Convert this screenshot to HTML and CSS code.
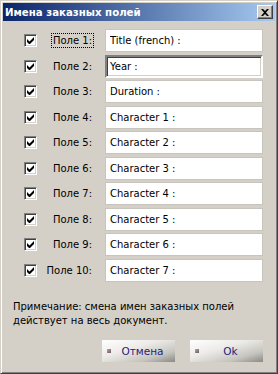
FILE: index.html
```html
<!DOCTYPE html>
<html lang="ru">
<head>
    <meta charset="UTF-8">
    <title>Имена заказных полей</title>
    <link rel="stylesheet" href="styles.css">
</head>
<body>
    <div class="window">
        <!-- Заголовок -->
        <div class="titlebar">
            <span class="title">Имена заказных полей</span>
            <span class="close">
                <svg width="8" height="7" viewBox="0 0 8 7">
                    <path d="M0 0h2l2 2 2-2h2L5 3.5 8 7H6L4 5 2 7H0l3-3.5z" fill="#000"/>
                </svg>
            </span>
        </div>

        <!-- Поля -->
        <div class="fields">
            <div class="row">
                <span class="check"></span>
                <label class="name"><span class="focus">Поле 1:</span></label>
                <input class="field" type="text" value="Title (french) :">
            </div>
            <div class="row">
                <span class="check"></span>
                <label class="name">Поле 2:</label>
                <input class="field sunken" type="text" value="Year :">
            </div>
            <div class="row">
                <span class="check"></span>
                <label class="name">Поле 3:</label>
                <input class="field" type="text" value="Duration :">
            </div>
            <div class="row">
                <span class="check"></span>
                <label class="name">Поле 4:</label>
                <input class="field" type="text" value="Character 1 :">
            </div>
            <div class="row">
                <span class="check"></span>
                <label class="name">Поле 5:</label>
                <input class="field" type="text" value="Character 2 :">
            </div>
            <div class="row">
                <span class="check"></span>
                <label class="name">Поле 6:</label>
                <input class="field" type="text" value="Character 3 :">
            </div>
            <div class="row">
                <span class="check"></span>
                <label class="name">Поле 7:</label>
                <input class="field" type="text" value="Character 4 :">
            </div>
            <div class="row">
                <span class="check"></span>
                <label class="name">Поле 8:</label>
                <input class="field" type="text" value="Character 5 :">
            </div>
            <div class="row">
                <span class="check"></span>
                <label class="name">Поле 9:</label>
                <input class="field" type="text" value="Character 6 :">
            </div>
            <div class="row">
                <span class="check"></span>
                <label class="name">Поле 10:</label>
                <input class="field" type="text" value="Character 7 :">
            </div>
        </div>

        <p class="note">Примечание: смена имен заказных полей<br>действует на весь документ.</p>

        <!-- Кнопки -->
        <div class="buttons">
            <button class="btn" type="button"><span class="bullet"></span>Отмена</button>
            <button class="btn" type="button"><span class="bullet"></span>Ok</button>
        </div>
    </div>
</body>
</html>
```

FILE: styles.css
```css
/* General */
body {
    margin: 0;
    font-family: 'DejaVu Sans', sans-serif;
    font-size: 10px;
    color: #000;
    background: #d4d0c8;
}

.window {
    width: 278px;
    height: 374px;
    box-sizing: border-box;
    border: 1px solid;
    border-color: #d4d0c8 #404040 #404040 #d4d0c8;
    box-shadow: inset 1px 1px #fff, inset -1px -1px #808080;
    padding: 2px;
    background: #d4d0c8;
    display: flex;
    flex-direction: column;
}

/* Заголовок */
.titlebar {
    height: 18px;
    display: flex;
    align-items: center;
    justify-content: space-between;
    padding: 0 2px 0 2px;
    background: linear-gradient(to right, #0a246a, #a6caf0);
}

.title {
    color: #fff;
    font-weight: bold;
    font-size: 10.2px;
}

.close {
    width: 16px;
    height: 14px;
    box-sizing: border-box;
    display: flex;
    align-items: center;
    justify-content: center;
    background: #d4d0c8;
    border: 1px solid;
    border-color: #fff #404040 #404040 #fff;
    box-shadow: inset -1px -1px #808080;
}

/* Поля */
.fields {
    display: grid;
    grid-auto-rows: 23px;
    row-gap: 2.55px;
    margin-top: 8px;
    padding-left: 21px;
}

.row {
    display: flex;
    align-items: center;
}

.check {
    width: 13px;
    height: 13px;
    box-sizing: border-box;
    border: 1px solid;
    border-color: #808080 #fff #fff #808080;
    box-shadow: inset 1px 1px #404040, inset -1px -1px #d4d0c8;
    background: #fff url("data:image/svg+xml,%3Csvg xmlns='http://www.w3.org/2000/svg' width='7' height='7'%3E%3Cpath d='M0 2v3l2 2h1l4-4V0L2.5 4.5z' fill='%23000'/%3E%3C/svg%3E") no-repeat 2px 2px;
}

.name {
    width: 55px;
    text-align: right;
}

.focus {
    outline: 1px dotted #000;
    outline-offset: 1px;
}

.field {
    width: 158px;
    height: 23px;
    box-sizing: border-box;
    margin-left: 13px;
    padding: 0 0 0 4px;
    font-family: inherit;
    font-size: 10px;
    color: #000;
    background: #fff;
    border: 1px solid #c8c5be;
    box-shadow: inset 1px 1px #fff;
    outline: none;
}

.field.sunken {
    border: 2px solid;
    border-color: #808080 #fff #fff #808080;
    box-shadow: inset 1px 1px #404040, inset -1px -1px #d4d0c8;
    padding-left: 3px;
}

/* Примечание */
.note {
    margin: 18px 0 0 10px;
    line-height: 14px;
}

/* Кнопки */
.buttons {
    display: flex;
    justify-content: flex-end;
    gap: 15px;
    margin-top: 12px;
    padding-right: 12px;
}

.btn {
    position: relative;
    width: 73px;
    height: 22px;
    border: none;
    padding: 0 0 0 8px;
    font-family: inherit;
    font-size: 10.5px;
    color: #1e1e78;
    background: linear-gradient(to bottom right, #fff 0%, #ecebe8 40%, #c6c4be 75%, #8a8884 100%);
}

.bullet {
    position: absolute;
    left: 5px;
    top: 9px;
    width: 4px;
    height: 4px;
    background: linear-gradient(to bottom right, #b9a4ac, #6e5a62);
}
```
